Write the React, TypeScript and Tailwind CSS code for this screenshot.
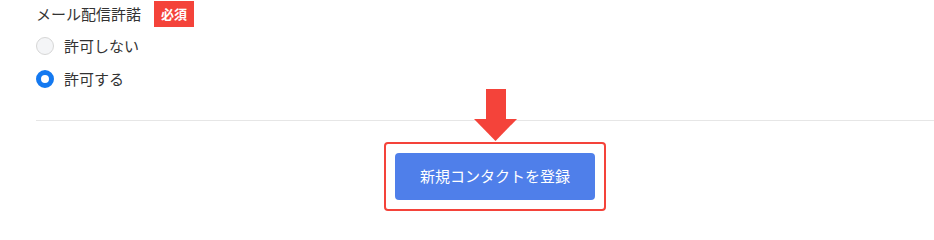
import React from 'react';

const options = [
  { label: '許可しない', checked: false },
  { label: '許可する', checked: true },
];

function Radio({ checked }: { checked: boolean }) {
  return checked ? (
    <span className="box-border size-[18px] rounded-full border-[5px] border-[#1479f0] bg-white" />
  ) : (
    <span className="box-border size-[18px] rounded-full border border-[#d6d6d6] bg-[#f4f5f7]" />
  );
}

export default function App() {
  return (
    <div
      className="w-[934px] h-[235px] bg-white text-[#333333] pt-[1px] pl-[36px]"
      style={{ fontFamily: '"Noto Sans CJK JP", "Noto Sans", sans-serif' }}
    >
      {/* Field label */}
      <div className="flex items-center h-[26px]">
        <span className="text-[15px] leading-[26px]">メール配信許諾</span>
        <span className="ml-[13px] h-[26px] w-[40px] flex items-center justify-center bg-[#f4433a] text-white text-[13px] font-bold">
          必須
        </span>
      </div>

      {/* Options */}
      <div className="mt-[10px] flex flex-col gap-[15px]">
        {options.map((o) => (
          <label key={o.label} className="flex items-center h-[18px] gap-[10px]">
            <Radio checked={o.checked} />
            <span className="text-[15px] leading-[18px]">{o.label}</span>
          </label>
        ))}
      </div>

      <div className="mt-[32px] h-px bg-[#e6e6e6]" />

      {/* Submit */}
      <div className="mt-[21px] pl-[348px]">
        <div className="relative w-[222px] h-[69px] rounded-[4px] border-2 border-[#f4433a] p-[9px]">
          <svg
            className="absolute left-[88px] top-[-55px]"
            width="43"
            height="52"
            viewBox="0 0 43 52"
          >
            <rect x="12" y="0" width="20" height="31" fill="#f4433a" />
            <polygon points="0,30 43,30 21.5,52" fill="#f4433a" />
          </svg>
          <button className="w-[200px] h-[47px] rounded-[4px] bg-[#4f7fea] text-white text-[15px]">
            新規コンタクトを登録
          </button>
        </div>
      </div>
    </div>
  );
}
